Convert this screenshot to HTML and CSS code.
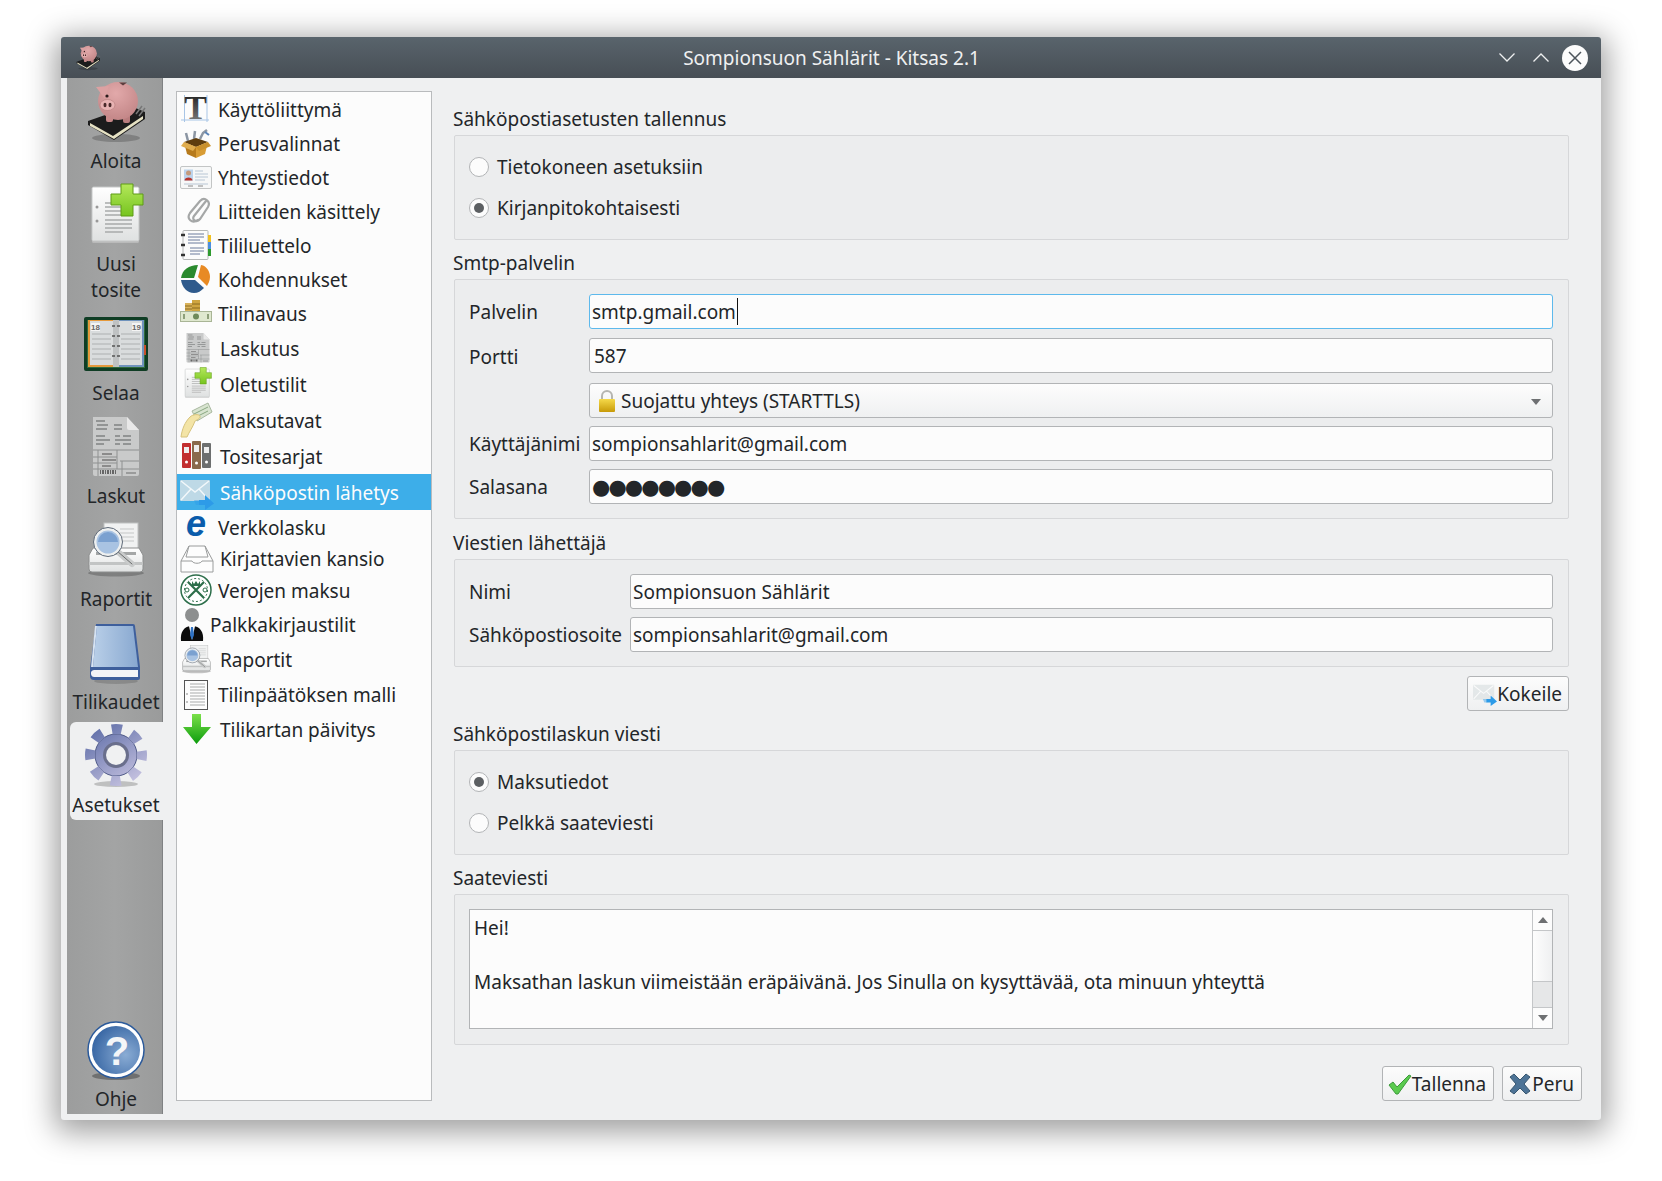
FILE: index.html
```html
<!DOCTYPE html>
<html lang="fi">
<head>
  <meta charset="UTF-8">
  <title>Sompionsuon Sählärit - Kitsas 2.1</title>
  <link rel="stylesheet" href="styles.css">
</head>
<body>
  <!-- yhteiset kuvakkeet -->
  <svg class="svg-defs" aria-hidden="true">
    <defs>
      <linearGradient id="g-paper" x1="0" y1="0" x2="0" y2="1"><stop offset="0" stop-color="#fff"/><stop offset="1" stop-color="#dfe1e1"/></linearGradient>
      <linearGradient id="g-plus" x1="0" y1="0" x2="0" y2="1"><stop offset="0" stop-color="#b4e85a"/><stop offset="1" stop-color="#76c41f"/></linearGradient>
      <linearGradient id="g-book" x1="0" y1="0" x2="1" y2="0"><stop offset="0" stop-color="#b9cfe8"/><stop offset="1" stop-color="#88a8d0"/></linearGradient>
      <linearGradient id="g-gear" gradientUnits="userSpaceOnUse" x1="10" y1="2" x2="50" y2="62"><stop offset="0" stop-color="#5f6ea8"/><stop offset="1" stop-color="#c9c5e2"/></linearGradient>
      <radialGradient id="g-help" cx=".7" cy=".6" r=".8"><stop offset="0" stop-color="#8aacd4"/><stop offset="1" stop-color="#2f5f9f"/></radialGradient>
      <radialGradient id="g-pig" cx=".45" cy=".3" r=".8"><stop offset="0" stop-color="#e2a9aa"/><stop offset="1" stop-color="#bf8283"/></radialGradient>
      <linearGradient id="g-titleT" x1="0" y1="0" x2="0" y2="1"><stop offset="0" stop-color="#111"/><stop offset="1" stop-color="#888"/></linearGradient>
      <linearGradient id="g-lock" x1="0" y1="0" x2="0" y2="1"><stop offset="0" stop-color="#f5d94a"/><stop offset="1" stop-color="#c79a08"/></linearGradient>
      <linearGradient id="g-down" x1="0" y1="0" x2="0" y2="1"><stop offset="0" stop-color="#7be04a"/><stop offset="1" stop-color="#0c9c0c"/></linearGradient>

      <symbol id="i-pig" viewBox="0 0 64 64">
        <ellipse cx="32" cy="58" rx="24" ry="4" fill="#000" opacity=".2"/>
        <path d="M4 41 47 26l14 6v7L30 60 4 45z" fill="#1c1c1c"/>
        <path d="M6 43 29 56 59 36v3L30 59 6 46z" fill="#e6e2c4"/>
        <path d="M52 34 58 26M55 36 61 28" stroke="#777" stroke-width="1.500" fill="none"/>
        <rect x="22" y="32" width="7" height="10" rx="2" fill="#c98a8a"/>
        <rect x="39" y="32" width="7" height="11" rx="2" fill="#b97c7d"/>
        <ellipse cx="34" cy="21" rx="20" ry="19" fill="url(#g-pig)"/>
        <path d="M12 7 25 6 21 19z" fill="#dca1a2"/>
        <path d="M35 2.500h8l-4 3z" fill="#5d3e3e"/>
        <ellipse cx="23.500" cy="25" rx="7.500" ry="5.500" fill="#e8b3b3" stroke="#b47a7a" stroke-width=".6"/>
        <ellipse cx="21" cy="25" rx="1.500" ry="2.200" fill="#4a2a2a"/>
        <ellipse cx="26" cy="25" rx="1.500" ry="2.200" fill="#4a2a2a"/>
        <circle cx="23" cy="16" r="1.600" fill="#2a1a1a"/>
      </symbol>

      <symbol id="i-docplus" viewBox="0 0 64 64">
        <rect x="8" y="6" width="47" height="54" rx="1.500" fill="#c9caca" opacity=".6"/>
        <rect x="8" y="4" width="47" height="54" rx="1.500" fill="url(#g-paper)" stroke="#c5c7c7"/>
        <path d="M21 20h20M21 24h20M21 28h20M21 32h20M21 37h27M21 41h27M21 45h27M21 49h18" stroke="#a8aaaa" stroke-width="1.300"/>
        <circle cx="13" cy="24" r="1.500" fill="#999"/><circle cx="13" cy="38" r="1.500" fill="#999"/>
        <path d="M37 1h12v10h10v11H49v11H37V22H27V11h10z" fill="url(#g-plus)" stroke="#5f9b16" stroke-linejoin="round"/>
      </symbol>

      <symbol id="i-invoice" viewBox="0 0 64 64">
        <path d="M9 2h34l12 13v44a2 2 0 0 1-2 2H11a2 2 0 0 1-2-2z" fill="#c9caca"/>
        <path d="M43 2l12 13H45a2 2 0 0 1-2-2z" fill="#e8e8e8"/>
        <path d="M12 6h9M13 10h11M12 14h11M30 10h8M30 14h8M12 21h9M12 25h14M12 29h8M31 21h5M39 21h8M31 25h16M31 29h5M39 29h8" stroke="#808282" stroke-width="1.400"/>
        <path d="M9 35h46M14 35v26M9 42h24M9 48h24M9 54h46M33 35v19M36 46h19M38 46v15" stroke="#8e9090" fill="none"/>
        <path d="M18 39h10M18 45h14M18 51h9" stroke="#777" stroke-width="1.400"/>
        <path d="M16 57h1M18 57h2M21 57h1M23 57h2M26 57h1M28 57h2M31 57h1" stroke="#666" stroke-width="4"/>
        <path d="M42 58h10" stroke="#808282" stroke-width="1.300"/>
      </symbol>

      <symbol id="i-printer" viewBox="0 0 64 64">
        <ellipse cx="32" cy="55" rx="28" ry="3.500" fill="#000" opacity=".22"/>
        <rect x="20" y="5" width="34" height="30" fill="#f1f2f2" stroke="#bfc1c1"/>
        <path d="M36 11h14M36 15h14M36 19h14M36 23h14" stroke="#c5c7c7"/>
        <path d="M9 30h46l4 7v14a3 3 0 0 1-3 3H8a3 3 0 0 1-3-3V37z" fill="url(#g-paper)" stroke="#8c8e8e"/>
        <rect x="5" y="44" width="54" height="3" fill="#c2c4c4"/>
        <rect x="12" y="34" width="40" height="3" fill="#a5a7a7"/>
        <path d="M33 33 48 46" stroke="#c9cbcb" stroke-width="6" stroke-linecap="round"/>
        <path d="M33 33 48 46" stroke="#6a6c6c" stroke-width="1" stroke-linecap="round"/>
        <circle cx="24" cy="24" r="13" fill="#a9c3e2" stroke="#eef0f0" stroke-width="3"/>
        <circle cx="24" cy="24" r="14.500" fill="none" stroke="#5f6a78"/>
        <path d="M14 24a10 10 0 0 1 20 0" fill="#5d8bc4" opacity=".6"/>
      </symbol>

      <symbol id="i-mail" viewBox="0 0 34 34">
        <rect x="0" y="4" width="30" height="21" rx="1" fill="#dfe3e5" opacity=".8"/>
        <path d="M1 5 15 16 29 5M1 24 11 13M29 24 19 13" stroke="#fff" stroke-width="1.500" fill="none" opacity=".8"/>
        <path d="M19 24h6v-5l9 8.500L25 34v-5h-6z" fill="#2d9be8"/>
        <path d="M14 24h6v5h-4z" fill="#2d9be8" opacity=".45"/>
      </symbol>
    </defs>
  </svg>

  <div class="window">
    <header class="titlebar">
      <svg class="title-logo" viewBox="0 0 64 64"><use href="#i-pig"/></svg>
      <div class="title-text">Sompionsuon Sählärit - Kitsas 2.1</div>
      <div class="title-buttons">
        <svg class="chevron" viewBox="0 0 16 9"><path d="M.5.5 8 8 15.500.5" fill="none" stroke="#eff0f1" stroke-width="1.300"/></svg>
        <svg class="chevron" viewBox="0 0 16 9"><path d="M.5 8.500 8 1l7.500 7.500" fill="none" stroke="#eff0f1" stroke-width="1.300"/></svg>
        <svg class="close" viewBox="0 0 26 26"><circle cx="13" cy="13" r="13" fill="#fcfcfc"/><path d="M7 7 19 19M19 7 7 19" stroke="#4d555c" stroke-width="1.500"/></svg>
      </div>
    </header>

    <div class="content">
      <nav class="side">
        <div class="side-item">
          <svg class="side-icon" viewBox="0 0 64 64"><use href="#i-pig"/></svg>
          <span>Aloita</span>
        </div>
        <div class="side-item">
          <svg class="side-icon" viewBox="0 0 64 64"><use href="#i-docplus"/></svg>
          <span>Uusi<br>tosite</span>
        </div>
        <div class="side-item">
          <svg class="side-icon" viewBox="0 0 64 64">
            <rect x="0" y="5" width="64" height="54" rx="2" fill="#0f3d24"/>
            <rect x="3" y="8" width="58" height="48" fill="#2e6b3a"/>
            <path d="M4 8h27v47H4z" fill="#e59a3c"/><path d="M33 8h27v47H33z" fill="#6f93bd"/>
            <rect x="60" y="33" width="2" height="10" fill="#c9502a"/>
            <path d="M6 9h25v44H6zM33 9h25v44H33z" fill="#d9dcdd"/>
            <path d="M29 8h6v47h-6z" fill="#bfc2c3"/>
            <path d="M8 22h19M8 27h19M8 32h19M8 37h19M8 42h19M8 47h19M37 22h19M37 27h19M37 32h19M37 37h19M37 42h19M37 47h19" stroke="#bcbfc0" stroke-width="1.400"/>
            <path d="M28 14h3M33 14h3M28 24h3M33 24h3M28 34h3M33 34h3M28 44h3M33 44h3" stroke="#555" stroke-width="1.500"/>
            <rect x="7" y="11" width="9" height="8" fill="#f4f4f4"/><rect x="48" y="11" width="9" height="8" fill="#f4f4f4"/>
            <text class="cal-num" x="11.500" y="18">18</text><text class="cal-num" x="52.500" y="18">19</text>
          </svg>
          <span>Selaa</span>
        </div>
        <div class="side-item">
          <svg class="side-icon" viewBox="0 0 64 64"><use href="#i-invoice"/></svg>
          <span>Laskut</span>
        </div>
        <div class="side-item">
          <svg class="side-icon" viewBox="0 0 64 64"><use href="#i-printer"/></svg>
          <span>Raportit</span>
        </div>
        <div class="side-item">
          <svg class="side-icon" viewBox="0 0 64 64">
            <ellipse cx="32" cy="60" rx="22" ry="3" fill="#000" opacity=".15"/>
            <path d="M12 3h37a2 2 0 0 1 2 2l5 41v11a2 2 0 0 1-2 2H10a4 4 0 0 1-4-4V47z" fill="#3e5f9c"/>
            <path d="M13 5h36l5 41H9z" fill="url(#g-book)"/>
            <path d="M10 49h44v7H11a3.500 3.500 0 0 1-1-7z" fill="#f3f4f6"/>
            <path d="M12 5 8 46" stroke="#d7e3f1" stroke-width="2"/>
          </svg>
          <span>Tilikaudet</span>
        </div>
        <div class="side-item active">
          <svg class="side-icon" viewBox="0 0 64 64">
            <ellipse cx="32" cy="60" rx="22" ry="3" fill="#000" opacity=".2"/>
            <circle cx="32" cy="31" r="21" fill="url(#g-gear)" stroke="#4f5a88"/>
            <circle cx="32" cy="31" r="26" fill="none" stroke="url(#g-gear)" stroke-width="10" stroke-dasharray="10.200 10.220" stroke-dashoffset="5.100"/>
            <circle cx="32" cy="31" r="13" fill="#6a6f8c"/>
            <circle cx="32" cy="31" r="10" fill="#f0f1f2"/>
          </svg>
          <span>Asetukset</span>
        </div>
        <div class="side-item help">
          <svg class="side-icon" viewBox="0 0 64 64">
            <ellipse cx="32" cy="58" rx="24" ry="4" fill="#000" opacity=".3"/>
            <circle cx="32" cy="32" r="28" fill="#fff" stroke="#2b5a9b" stroke-width="1.500"/>
            <circle cx="32" cy="32" r="24" fill="url(#g-help)"/>
            <text class="help-mark" x="33" y="47">?</text>
          </svg>
          <span>Ohje</span>
        </div>
      </nav>

      <aside class="list">
        <div class="row">
          <svg class="icon" viewBox="0 0 34 34">
            <path d="M4.500 3v27M1 28h28M27 3v27" stroke="#a8c5e6" fill="none"/>
            <text class="icon-t" x="15.500" y="27">T</text>
          </svg>
          Käyttöliittymä
        </div>
        <div class="row">
          <svg class="icon" viewBox="0 0 34 34">
            <path d="M8 15 6 7M14 13l1-8M20 13l3-6 4-3" stroke="#8c96a3" stroke-width="2.500" fill="none"/>
            <path d="M25 6l4 3" stroke="#5b84b8" stroke-width="2"/>
            <path d="M4 16l12-4 12 4-12 5z" fill="#5e3d0e"/>
            <path d="M4 16l12 5v11l-9-4z" fill="#b67a1c"/>
            <path d="M28 16l-12 5v11l9-4z" fill="#d89c34"/>
            <path d="M4 16 1 20l12 5 3-4z" fill="#e0ad4e"/>
            <path d="M28 16l3 4-12 5-3-4z" fill="#c9902c"/>
          </svg>
          Perusvalinnat
        </div>
        <div class="row">
          <svg class="icon" viewBox="0 0 34 34">
            <rect x=".5" y="6.500" width="31" height="22" rx="1.500" fill="#f7f8f8" stroke="#c3c5c5"/>
            <rect x="4" y="9.500" width="9" height="11" fill="#bcd3ec"/>
            <circle cx="8.500" cy="13" r="2.500" fill="#c49a7c"/>
            <path d="M4.500 20.500c0-4 8-4 8 0z" fill="#b5352e"/>
            <path d="M15 11h8M15 14h13M15 17h13M15 20h10M4 24h24" stroke="#b8c6d4"/>
            <path d="M8 26h5M18 26h5" stroke="#888"/>
          </svg>
          Yhteystiedot
        </div>
        <div class="row">
          <svg class="icon" viewBox="0 0 34 34">
            <path d="M24 9 12 24c-3 4 3 7 6 3L26 15c3-5-3-11-8-6L8 21c-4 6 2 11 8 7" fill="none" stroke="#a5a7a7" stroke-width="2.200" stroke-linecap="round" transform="translate(2 -2)"/>
          </svg>
          Liitteiden käsittely
        </div>
        <div class="row">
          <svg class="icon" viewBox="0 0 34 34">
            <rect x="3" y="2.500" width="25" height="29" rx="1" fill="#fbfbfb" stroke="#b5b7b7"/>
            <rect x="28" y="7" width="3" height="7" fill="#f0c020"/><rect x="28" y="14" width="3" height="7" fill="#4a8fe0"/><rect x="28" y="21" width="3" height="7" fill="#2e9a2e"/>
            <path d="M1 7h4M1 17h4M1 27h4" stroke="#333" stroke-width="2.500"/>
            <path d="M8 6h16M8 9h16M8 12h12M8 15h16M10 20h14M10 23h14M10 26h10" stroke="#6a7a9c"/>
          </svg>
          Tililuettelo
        </div>
        <div class="row">
          <svg class="icon" viewBox="0 0 34 34">
            <path d="M1 16C2 8 9 3 18 3l-4 13z" fill="#2a8a2e"/>
            <path d="M21 3c6 1 9 7 9 12 0 4-2 7-3 9l-9-9z" fill="#e88a24"/>
            <path d="M1 18h14l9 8c-3 3-6 5-10 5C7 31 2 25 1 18z" fill="#2f5a8c"/>
          </svg>
          Kohdennukset
        </div>
        <div class="row">
          <svg class="icon" viewBox="0 0 34 34">
            <rect x="5" y="7" width="7" height="9" fill="#d9b25a"/><rect x="12" y="4" width="8" height="12" fill="#cfa540"/>
            <path d="M5 10h7M5 13h7M12 8h8M12 12h8" stroke="#8a6a20"/>
            <rect x=".5" y="15.500" width="31" height="10" fill="#dfe8cf" stroke="#a9b596"/>
            <circle cx="16" cy="20.500" r="3" fill="#6e8a5a"/>
            <path d="M4 18v5M28 18v5" stroke="#8ea07a" stroke-width="2"/>
          </svg>
          Tilinavaus
        </div>
        <div class="row row-l row-far">
          <svg class="icon" viewBox="0 0 34 36"><use href="#i-invoice" x="2" y="2" width="32" height="32"/></svg>
          Laskutus
        </div>
        <div class="row row-l row-far">
          <svg class="icon" viewBox="0 0 34 36"><use href="#i-docplus" x="1" y="1" width="33" height="33"/></svg>
          Oletustilit
        </div>
        <div class="row row-l">
          <svg class="icon" viewBox="0 0 34 36">
            <path d="M12 9 28 1l4 9-15 9z" fill="#d8e4d0" stroke="#a9b8a0"/>
            <path d="M14 12l14-7M18 14l10-5" stroke="#8aa882"/>
            <path d="M10 15c3-3 9-3 10-1s-3 4-5 5c-2 6-6 11-8 16H1c1-8 4-15 9-20z" fill="#f3e4a6" stroke="#d6c27c"/>
          </svg>
          Maksutavat
        </div>
        <div class="row row-l row-far">
          <svg class="icon" viewBox="0 0 34 36">
            <rect x="2" y="5" width="9" height="25" rx="1" fill="#c22f30"/><rect x="12" y="3" width="9" height="28" rx="1" fill="#8a6a4c"/><rect x="22" y="5" width="9" height="25" rx="1" fill="#6d6f6f"/>
            <path d="M4 9h5v6H4zM14 7h5v7h-5zM24 9h5v6h-5z" fill="#eeeeee"/>
            <circle cx="6.500" cy="24" r="1.500" fill="#fff"/><circle cx="16.500" cy="25" r="1.500" fill="#fff"/><circle cx="26.500" cy="24" r="1.500" fill="#fff"/>
          </svg>
          Tositesarjat
        </div>
        <div class="row row-l row-far selected">
          <svg class="icon" viewBox="0 0 34 36"><use href="#i-mail" x="0" y="2" width="34" height="34"/></svg>
          Sähköpostin lähetys
        </div>
        <div class="row">
          <svg class="icon" viewBox="0 0 34 34">
            <text class="icon-e" x="16" y="26">e</text>
          </svg>
          Verkkolasku
        </div>
        <div class="row row-xs row-far row-flat">
          <svg class="icon" viewBox="0 0 34 30">
            <path d="M9 2h16l8 15v11H1V17z" fill="#fdfdfd" stroke="#9a9c9c"/>
            <path d="M9 2 6 13h22L25 2M1 17h11c1 3 9 3 10 0h11" fill="none" stroke="#9a9c9c"/>
          </svg>
          Kirjattavien kansio
        </div>
        <div class="row row-flat">
          <svg class="icon" viewBox="0 0 34 34">
            <circle cx="16" cy="16" r="15" fill="#fff" stroke="#2c6e4a" stroke-width="1.500"/>
            <circle cx="16" cy="16" r="11.500" fill="none" stroke="#2c6e4a" stroke-dasharray="2 2"/>
            <path d="M8 8 24 24M24 8 8 24" stroke="#2c6e4a" stroke-width="2.200"/>
            <path d="M12 7l2 3 2-3 2 3 2-3v5h-8z" fill="#2c6e4a"/>
            <circle cx="7" cy="16" r="2" fill="none" stroke="#2c6e4a"/><circle cx="25" cy="16" r="2" fill="none" stroke="#2c6e4a"/>
          </svg>
          Verojen maksu
        </div>
        <div class="row row-flat">
          <svg class="icon icon-narrow" viewBox="0 0 26 34">
            <circle cx="12" cy="7" r="7" fill="#8d8f8f"/>
            <path d="M1 33c-1-9 3-15 11-15s12 6 11 15z" fill="#0c0c0c"/>
            <path d="M9 18h6l-3 14z" fill="#fff"/>
            <path d="M11 19h2l1 8-2 5-2-5z" fill="#2f72c4"/>
          </svg>
          Palkkakirjaustilit
        </div>
        <div class="row row-m row-far row-flat">
          <svg class="icon" viewBox="0 0 34 35"><use href="#i-printer" x="0" y="1" width="33" height="33"/></svg>
          Raportit
        </div>
        <div class="row row-m row-flat">
          <svg class="icon" viewBox="0 0 34 35">
            <rect x="4.500" y="3.500" width="23" height="29" fill="#fdfdfd" stroke="#555"/>
            <path d="M10 7h15M10 10h15M10 13h15M10 16h15M10 19h15M10 22h15M10 25h15M10 28h15" stroke="#a9abab"/>
            <path d="M7 16v2M7 24v2" stroke="#888"/>
          </svg>
          Tilinpäätöksen malli
        </div>
        <div class="row row-m row-far row-flat">
          <svg class="icon" viewBox="0 0 34 35">
            <path d="M12 2h9v13h10L16.500 32 3 15h9z" fill="url(#g-down)"/>
          </svg>
          Tilikartan päivitys
        </div>
      </aside>

      <main class="panel">
        <h3 class="group-title first">Sähköpostiasetusten tallennus</h3>
        <section class="group radios">
          <label class="radio"><span class="radio-dot"></span>Tietokoneen asetuksiin</label>
          <label class="radio"><span class="radio-dot checked"></span>Kirjanpitokohtaisesti</label>
        </section>

        <h3 class="group-title title-high">Smtp-palvelin</h3>
        <section class="group form form-smtp">
          <div class="lbl">Palvelin</div>
          <div class="field focus">smtp.gmail.com<span class="caret"></span></div>
          <div class="lbl lbl-low">Portti</div>
          <div class="field spin">587</div>
          <div></div>
          <div class="field combo">
            <svg class="lock" viewBox="0 0 18 24">
              <path d="M4 11V7a5 5 0 0 1 10 0v4" fill="none" stroke="#b5b5b0" stroke-width="2"/>
              <rect x="1" y="10" width="16" height="13" rx="1" fill="url(#g-lock)"/>
            </svg>
            Suojattu yhteys (STARTTLS)
            <span class="combo-arrow"></span>
          </div>
          <div class="lbl">Käyttäjänimi</div>
          <div class="field">sompionsahlarit@gmail.com</div>
          <div class="lbl">Salasana</div>
          <div class="field password">●●●●●●●●</div>
        </section>

        <h3 class="group-title title-sender">Viestien lähettäjä</h3>
        <section class="group form form-sender">
          <div class="lbl">Nimi</div>
          <div class="field">Sompionsuon Sählärit</div>
          <div class="lbl">Sähköpostiosoite</div>
          <div class="field">sompionsahlarit@gmail.com</div>
        </section>

        <div class="try-row">
          <button class="btn">
            <svg class="btn-icon" viewBox="0 0 34 34"><use href="#i-mail"/></svg>Kokeile
          </button>
        </div>

        <h3 class="group-title title-high">Sähköpostilaskun viesti</h3>
        <section class="group radios">
          <label class="radio"><span class="radio-dot checked"></span>Maksutiedot</label>
          <label class="radio"><span class="radio-dot"></span>Pelkkä saateviesti</label>
        </section>

        <h3 class="group-title title-high">Saateviesti</h3>
        <section class="group memo-group">
          <div class="memo">
            <div class="memo-text">
              <p>Hei!</p>
              <p>&nbsp;</p>
              <p>Maksathan laskun viimeistään eräpäivänä. Jos Sinulla on kysyttävää, ota minuun yhteyttä</p>
            </div>
            <div class="scrollbar">
              <div class="sb-btn"><span class="arrow-up"></span></div>
              <div class="sb-trough"></div>
              <div class="sb-thumb"></div>
              <div class="sb-btn"><span class="arrow-down"></span></div>
            </div>
          </div>
        </section>

        <div class="actions">
          <button class="btn">
            <svg class="btn-icon" viewBox="0 0 24 24"><path d="M1 13l4-3 4 5L21 3l2 1L10 22h-2z" fill="#5bcb4f" stroke="#3d9a3c"/></svg>Tallenna
          </button>
          <button class="btn">
            <svg class="btn-icon" viewBox="0 0 24 24"><path d="M2 5l4-3 6 6 6-6 4 3-6 7 6 7-4 3-6-6-6 6-4-3 6-7z" fill="#4d7396" stroke="#37566f"/></svg>Peru
          </button>
        </div>
      </main>
    </div>
  </div>
</body>
</html>
```

FILE: styles.css
```css
* {
  box-sizing: border-box;
}
html, body {
  margin: 0;
  padding: 0;
  background: #fff;
}
body {
  padding: 37px 0 0 61px;
  font-family: "Noto Sans", sans-serif;
  font-size: 19px;
  color: #232629;
  overflow: hidden;
  height: 1181px;
}
.svg-defs {
  display: block;
  width: 0;
  height: 0;
}
.window {
  width: 1540px;
  height: 1083px;
  background: #eff0f1;
  border-radius: 3px;
  box-shadow: 0 6px 30px 6px rgba(0, 0, 0, 0.38);
  display: flex;
  flex-direction: column;
}

/* otsikkopalkki */
.titlebar {
  height: 41px;
  flex: none;
  background: linear-gradient(#59646c, #474e55);
  border-radius: 3px 3px 0 0;
  display: grid;
  grid-template-columns: 1fr auto 1fr;
  align-items: center;
  padding: 0 13px 0 14px;
  color: #eff0f1;
}
.title-logo {
  width: 26px;
  height: 28px;
}
.title-buttons {
  display: flex;
  justify-content: flex-end;
  align-items: center;
}
.chevron {
  width: 16px;
  height: 9px;
  margin-right: 18px;
}
.chevron + .close {
  margin-left: -5px;
}
.close {
  width: 26px;
  height: 26px;
}

.content {
  flex: 1;
  display: flex;
  min-height: 0;
}

/* vasen sarake */
.side {
  width: 96px;
  margin: 0 0 6px 6px;
  padding-left: 3px;
  flex: none;
  background: linear-gradient(90deg, #9c9d9d, #a3a4a4 50%, #9a9b9b);
  border-right: 1px solid #7f8183;
  display: flex;
  flex-direction: column;
  gap: 5px;
}
.side-item {
  display: flex;
  flex-direction: column;
  align-items: center;
  padding: 2px 0;
  text-align: center;
  line-height: 26px;
}
.side-icon {
  width: 64px;
  height: 64px;
  margin-bottom: 4px;
  flex: none;
}
.side-item.active {
  margin: 0 -14px 0 0;
  padding-right: 14px;
  background: #eff0f1;
  border-radius: 6px 0 0 6px;
}
.side-item span {
  white-space: nowrap;
}
.side-item.help {
  margin-top: auto;
}
.cal-num {
  font: bold 8px "Liberation Sans", sans-serif;
  fill: #666;
  text-anchor: middle;
}
.help-mark {
  font: bold 40px "Liberation Sans", sans-serif;
  fill: #f4f6f8;
  text-anchor: middle;
}

/* luettelo */
.list {
  width: 256px;
  height: 1010px;
  margin: 13px 0 0 13px;
  flex: none;
  background: #fcfcfc;
  border: 1px solid #b9bbbd;
}
.row {
  height: 34px;
  display: flex;
  align-items: center;
  padding: 2px 0 0 3px;
  white-space: nowrap;
}
.row-l {
  height: 36px;
}
.row-m {
  height: 35px;
}
.row-xs {
  height: 30px;
}
.icon {
  width: 34px;
  height: calc(100% + 2px);
  margin: -2px 4px 0 0;
  flex: none;
  overflow: visible;
}
.icon-narrow {
  width: 26px;
}
.row-far .icon {
  margin-right: 6px;
}
.row-flat {
  padding-top: 0;
}
.row-flat .icon {
  height: 100%;
  margin-top: 0;
}
.selected {
  background: #3daee9;
  color: #fcfcfc;
}
.icon-t {
  font: bold 34px "Liberation Serif", serif;
  fill: url(#g-titleT);
  text-anchor: middle;
}
.icon-e {
  font: italic bold 36px "Liberation Sans", sans-serif;
  fill: #0a5cab;
  text-anchor: middle;
}

/* oikea puoli */
.panel {
  flex: 1;
  padding: 0 19px 0 22px;
  min-width: 0;
}
.group-title {
  margin: 0 0 0 -1px;
  height: 39px;
  padding-top: 10px;
  font-size: 19px;
  line-height: 28px;
  font-weight: normal;
}
.group-title.first {
  height: 57px;
  padding-top: 27px;
}
.title-high {
  padding-top: 9px;
}
.title-sender {
  height: 40px;
}
.group {
  width: 1115px;
  background: #ecedee;
  border: 1px solid #d6d7d9;
  border-radius: 2px;
}
.radios {
  height: 105px;
  padding: 10px 14px;
}
.radio {
  height: 41px;
  display: flex;
  align-items: center;
  gap: 8px;
}
.radio-dot {
  width: 20px;
  height: 20px;
  flex: none;
  border: 1px solid #b2b4b6;
  border-radius: 50%;
  background: #fcfcfc;
  display: flex;
  align-items: center;
  justify-content: center;
}
.radio-dot.checked::after {
  content: "";
  width: 10px;
  height: 10px;
  border-radius: 50%;
  background: #5c5f62;
}
.form {
  display: grid;
  padding: 14px 15px 14px 14px;
  align-items: start;
}
.form-smtp {
  grid-template-columns: 120px 1fr;
  grid-template-rows: 44px 45px 43px 43px 35px;
}
.form-sender {
  grid-template-columns: 161px 1fr;
  grid-template-rows: 43px 35px;
}
.lbl {
  padding-top: 1px;
  line-height: 35px;
}
.lbl-low {
  padding-top: 2px;
}
.field {
  height: 35px;
  display: flex;
  align-items: center;
  padding: 0 2px;
  background: #fcfcfc;
  border: 1px solid #b2b4b6;
  border-radius: 3px;
  white-space: nowrap;
}
.field.focus {
  border-color: #5db9ec;
}
.caret {
  width: 1px;
  height: 27px;
  margin-left: 1px;
  background: #111;
}
.field.spin {
  padding: 1px 0 0 4px;
}
.field.combo {
  position: relative;
  padding-left: 8px;
  background: linear-gradient(#fdfdfd, #eff0f1);
}
.lock {
  width: 18px;
  height: 24px;
  margin-right: 5px;
}
.combo-arrow {
  position: absolute;
  right: 11px;
  top: 15px;
  border-left: 5px solid transparent;
  border-right: 5px solid transparent;
  border-top: 6px solid #6e7072;
}
.password {
  font-family: "DejaVu Sans", sans-serif;
  font-size: 21px;
  letter-spacing: -1.9px;
}
.try-row {
  width: 1115px;
  margin-top: 9px;
  display: flex;
  justify-content: flex-end;
}
.btn {
  height: 35px;
  display: flex;
  align-items: center;
  padding: 0 6px 0 5px;
  font: inherit;
  color: inherit;
  background: linear-gradient(#fcfcfc, #eff0f1);
  border: 1px solid #b2b4b6;
  border-radius: 3px;
}
.btn-icon {
  width: 24px;
  height: 24px;
}
.memo-group {
  padding: 14px 15px 15px 14px;
}
.memo {
  height: 120px;
  display: flex;
  background: #fcfcfc;
  border: 1px solid #b2b4b6;
}
.memo-text {
  flex: 1;
  padding: 5px 4px;
  line-height: 27px;
}
.memo-text p {
  margin: 0;
}
.scrollbar {
  width: 20px;
  flex: none;
  display: flex;
  flex-direction: column;
  border-left: 1px solid #c4c6c8;
}
.sb-btn {
  height: 20px;
  flex: none;
  display: flex;
  align-items: center;
  justify-content: center;
}
.sb-trough {
  flex: 1;
  background: linear-gradient(90deg, #fdfdfd, #eff0f1);
  border-top: 1px solid #c4c6c8;
}
.sb-thumb {
  height: 27px;
  flex: none;
  background: #e6e7e8;
  border-top: 1px solid #c4c6c8;
  border-bottom: 1px solid #c4c6c8;
}
.arrow-up, .arrow-down {
  border-left: 5px solid transparent;
  border-right: 5px solid transparent;
}
.arrow-up {
  border-bottom: 6px solid #6e7072;
}
.arrow-down {
  border-top: 6px solid #6e7072;
}
.actions {
  margin-top: 21px;
  display: flex;
  justify-content: flex-end;
  gap: 8px;
}
.actions .btn {
  padding-right: 7px;
}
```
